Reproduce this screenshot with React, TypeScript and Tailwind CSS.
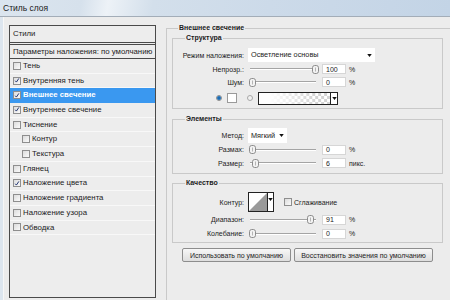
import React from 'react';

const layerStyles = [
  { label: 'Тень', checked: false },
  { label: 'Внутренняя тень', checked: true },
  { label: 'Внешнее свечение', checked: true, active: true },
  { label: 'Внутреннее свечение', checked: true },
  { label: 'Тиснение', checked: false },
  { label: 'Контур', checked: false, indent: true },
  { label: 'Текстура', checked: false, indent: true },
  { label: 'Глянец', checked: false },
  { label: 'Наложение цвета', checked: true },
  { label: 'Наложение градиента', checked: false },
  { label: 'Наложение узора', checked: false },
  { label: 'Обводка', checked: false },
];

function CheckBox({ checked }: { checked: boolean }) {
  return (
    <span className="flex h-[8px] w-[8px] shrink-0 items-center justify-center border border-[#8e8e8e] bg-gradient-to-br from-[#dcdcdc] to-[#fafafa]">
      {checked && (
        <svg viewBox="0 0 8 8" className="h-[7px] w-[7px]">
          <path d="M1.6 4.3 L3.2 6.1 L6.5 1.2" fill="none" stroke="#1f3270" strokeWidth="1.3" />
        </svg>
      )}
    </span>
  );
}

function Slider({ thumb }: { thumb: string }) {
  return (
    <div className="relative ml-[2px] h-[10px] w-[66px]">
      <div className="absolute left-0 right-0 top-[4px] h-[2px] border-t border-b border-t-[#a4a4a4] border-b-white" />
      <svg viewBox="0 0 7 9" className={`absolute top-[0.5px] h-[9px] w-[7px] ${thumb}`}>
        <rect x="0.5" y="0.5" width="6" height="8" rx="2.2" fill="#f3f3f3" stroke="#8c8c8c" />
        <line x1="3.5" y1="2.5" x2="3.5" y2="6.5" stroke="#b5b5b5" />
      </svg>
    </div>
  );
}

function NumberBox({ value }: { value: string }) {
  return (
    <div className="ml-[6px] flex h-[10px] w-[24px] items-center border border-[#d6d6d6] bg-white pl-[3px]">{value}</div>
  );
}

function Label({ text }: { text: string }) {
  return <span className="w-[71px] shrink-0 text-right">{text}</span>;
}

function SliderRow({ label, thumb, value, unit, h }: { label: string; thumb: string; value: string; unit: string; h: string }) {
  return (
    <div className={`flex items-center gap-[4px] ${h}`}>
      <Label text={label} />
      <div className="flex items-center">
        <Slider thumb={thumb} />
        <NumberBox value={value} />
        <span className="ml-[3px]">{unit}</span>
      </div>
    </div>
  );
}

function Arrow() {
  return (
    <svg viewBox="0 0 6 4" className="h-[3px] w-[5px]">
      <path d="M0 0 H6 L3 4 Z" fill="#111" />
    </svg>
  );
}

function Group({ title, className, children }: { title: string; className: string; children: React.ReactNode }) {
  return (
    <fieldset className={`w-[271px] border border-[#c9c9c9] ${className}`}>
      <legend className="ml-[12px] px-[1px] font-bold leading-[10px]">{title}</legend>
      {children}
    </fieldset>
  );
}

export default function App() {
  return (
    <div className="h-[300px] w-[450px] overflow-hidden bg-[#ececec] font-['Liberation_Sans',Arial,sans-serif] leading-none text-[#1c1c1c]">
      {/* title bar */}
      <div className="flex h-[16px] items-center bg-[linear-gradient(100deg,#dbe5ef_0%,#d6e1ec_18%,#edf2f7_24%,#d3dfeb_34%,#ccdae9_60%,#c3d4e6_100%)] pl-[3px] text-[8.5px] text-[#202020]">
        Стиль слоя
      </div>
      <div className="flex h-[284px] border-t border-[#a3adb8] bg-[#dde6ef] pl-[3px]">
        <div className="flex flex-1 border-l border-[#f7f7f7] bg-[#ececec] pl-[5px]">
          {/* left list */}
          <div className="mt-[8px] flex h-[273px] w-[147px] flex-col border border-[#4a4a4a] bg-[#ededed] text-[7.8px]">
            <div className="flex h-[17px] items-center border-b border-[#4a4a4a] pl-[3px]">Стили</div>
            <div className="mt-[1px] flex h-[15px] items-center border-t border-b border-[#4a4a4a] pl-[3px]">
              Параметры наложения: по умолчанию
            </div>
            {layerStyles.map((s) => (
              <div
                key={s.label}
                className={`flex h-[14.7px] items-center gap-[2px] border-b ${
                  s.active ? 'border-[#3a98f0] bg-[#3a98f0] font-bold text-white' : 'border-[#f8f8f8]'
                } ${s.indent ? 'pl-[12px]' : 'pl-[3px]'}`}
              >
                <CheckBox checked={s.checked} />
                <span>{s.label}</span>
              </div>
            ))}
          </div>

          {/* right settings */}
          <fieldset className="ml-[10px] mt-[6px] h-[300px] w-[290px] shrink-0 border border-[#c9c9c9] pl-[5px] text-[7px]">
            <legend className="ml-[6px] px-[1px] font-bold leading-[10px]">Внешнее свечение</legend>

            <Group title="Структура" className="pt-[5px] pb-[4px]">
              <div className="flex h-[14px] items-center gap-[4px]">
                <Label text="Режим наложения:" />
                <div className="flex h-[14px] w-[127px] items-center justify-between bg-white pl-[3px] pr-[3px] text-[7.3px]">
                  <span>Осветление основы</span>
                  <Arrow />
                </div>
              </div>
              <SliderRow label="Непрозр.:" thumb="left-[62px]" value="100" unit="%" h="h-[14px]" />
              <SliderRow label="Шум:" thumb="left-[-1px]" value="0" unit="%" h="h-[12px]" />
              <div className="mt-[4px] flex h-[12px] items-center pl-[43px]">
                <span className="flex h-[6px] w-[6px] items-center justify-center rounded-full border border-[#8a8a8a] bg-white">
                  <span className="h-[4px] w-[4px] rounded-full bg-[#1b6cb4]" />
                </span>
                <span className="ml-[5px] h-[10px] w-[10px] border border-[#9a9a9a] bg-white" />
                <span className="ml-[10px] h-[6px] w-[6px] rounded-full border border-[#a8a8a8] bg-[#f2f2f2]" />
                <div className="ml-[5px] flex h-[13px] w-[80px] border border-[#222]">
                  <svg viewBox="0 0 72 11" preserveAspectRatio="none" className="h-full flex-1">
                    <defs>
                      <pattern id="chk" width="6" height="6" patternUnits="userSpaceOnUse">
                        <rect width="6" height="6" fill="#fff" />
                        <rect width="3" height="3" fill="#d4d4d4" />
                        <rect x="3" y="3" width="3" height="3" fill="#d4d4d4" />
                      </pattern>
                      <linearGradient id="fade" x1="0" x2="1" y1="0" y2="0">
                        <stop offset="0" stopColor="#fff" stopOpacity="1" />
                        <stop offset="0.15" stopColor="#fff" stopOpacity="1" />
                        <stop offset="0.8" stopColor="#fff" stopOpacity="0" />
                      </linearGradient>
                    </defs>
                    <rect width="72" height="11" fill="url(#chk)" />
                    <rect width="72" height="11" fill="url(#fade)" />
                  </svg>
                  <div className="flex w-[7px] items-center justify-center border-l border-[#222] bg-white">
                    <Arrow />
                  </div>
                </div>
              </div>
            </Group>

            <Group title="Элементы" className="mt-[5px] pt-[4px] pb-[3px]">
              <div className="flex h-[15px] items-center gap-[4px]">
                <Label text="Метод:" />
                <div className="flex h-[15px] w-[39px] items-center justify-between bg-white pl-[3px] pr-[3px] text-[7.3px]">
                  <span>Мягкий</span>
                  <Arrow />
                </div>
              </div>
              <SliderRow label="Размах:" thumb="left-[-1px]" value="0" unit="%" h="h-[13px]" />
              <SliderRow label="Размер:" thumb="left-[2px]" value="6" unit="пикс." h="h-[14px]" />
            </Group>

            <Group title="Качество" className="mt-[4px] pt-[4px] pb-[2px]">
              <div className="flex h-[20px] items-center gap-[4px]">
                <Label text="Контур:" />
                <div className="flex h-[20px] w-[26px] border border-[#222] bg-white">
                  <svg viewBox="0 0 18 18" preserveAspectRatio="none" className="h-full w-[18px]">
                    <rect width="18" height="18" fill="#fff" />
                    <path d="M0 18 L18 0 L18 18 Z" fill="#9a9a9a" />
                  </svg>
                  <div className="flex flex-1 items-start justify-center border-l border-[#222] pt-[5px]">
                    <Arrow />
                  </div>
                </div>
                <div className="ml-[6px] flex items-center gap-[2px]">
                  <CheckBox checked={false} />
                  <span>Сглаживание</span>
                </div>
              </div>
              <SliderRow label="Диапазон:" thumb="left-[57px]" value="91" unit="%" h="h-[15px]" />
              <SliderRow label="Колебание:" thumb="left-[-1px]" value="0" unit="%" h="h-[13px]" />
            </Group>

            <div className="ml-[10px] mt-[5px] flex gap-[3px]">
              <button className="h-[14px] w-[109px] rounded-[2px] border border-[#8d8d8d] bg-gradient-to-b from-[#f7f7f7] to-[#dedede] text-[7px] leading-none text-[#1c1c1c]">
                Использовать по умолчанию
              </button>
              <button className="h-[14px] w-[139px] rounded-[2px] border border-[#8d8d8d] bg-gradient-to-b from-[#f7f7f7] to-[#dedede] text-[7px] leading-none text-[#1c1c1c]">
                Восстановить значения по умолчанию
              </button>
            </div>
          </fieldset>
        </div>
      </div>
    </div>
  );
}
